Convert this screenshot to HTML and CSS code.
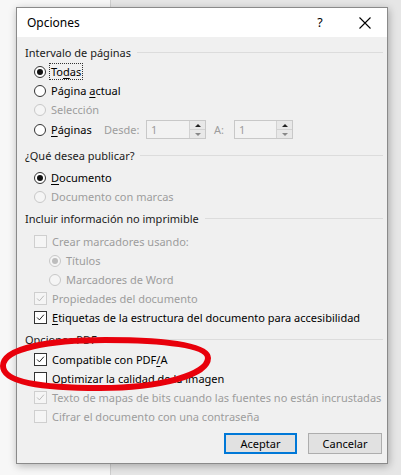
FILE: index.html
```html
<!DOCTYPE html>
<html lang="es">
<head>
<meta charset="utf-8">
<title>Opciones</title>
<link rel="stylesheet" href="styles.css">
</head>
<body>
<div class="screen">
  <div class="dialog">
    <div class="titlebar">
      <span class="title">Opciones</span>
      <span class="help">?</span>
      <span class="close"><svg width="12" height="12" viewBox="0 0 12 12"><path d="M0.5 0.5 L11.5 11.5 M11.5 0.5 L0.5 11.5" stroke="#000" stroke-width="1.1" fill="none"/></svg></span>
    </div>
    <div class="content">
      <section class="group g1">
        <div class="ghead"><span>Intervalo de páginas</span></div>
        <div class="row"><span class="radio on"></span><span class="lbl focus">To<u>d</u>as</span></div>
        <div class="row"><span class="radio"></span><span class="lbl">Página <u>a</u>ctual</span></div>
        <div class="row dis"><span class="radio"></span><span class="lbl">Selección</span></div>
        <div class="row spinrow">
          <span class="radio"></span><span class="lbl lbl-pag"><u>P</u>áginas</span>
          <span class="slabel desde">Desde:</span>
          <span class="spin"><span class="val">1</span><span class="btns"><span class="sb up"></span><span class="sb down"></span></span></span>
          <span class="slabel a">A:</span>
          <span class="spin"><span class="val">1</span><span class="btns"><span class="sb up"></span><span class="sb down"></span></span></span>
        </div>
      </section>
      <section class="group g2">
        <div class="ghead"><span>¿Qué desea publicar?</span></div>
        <div class="row"><span class="radio on"></span><span class="lbl"><u>D</u>ocumento</span></div>
        <div class="row dis"><span class="radio"></span><span class="lbl">Documento con marcas</span></div>
      </section>
      <section class="group g3">
        <div class="ghead"><span>Incluir información no imprimible</span></div>
        <div class="row dis"><span class="check"></span><span class="lbl">Crear marcadores usando:</span></div>
        <div class="row dis sub"><span class="radio on"></span><span class="lbl">Títulos</span></div>
        <div class="row dis sub"><span class="radio"></span><span class="lbl">Marcadores de Word</span></div>
        <div class="row dis"><span class="check on"><svg viewBox="0 0 13 13"><path d="M2.5 6.5 L5.2 9.3 L10.5 3.2"/></svg></span><span class="lbl">Propiedades del documento</span></div>
        <div class="row"><span class="check on"><svg viewBox="0 0 13 13"><path d="M2.5 6.5 L5.2 9.3 L10.5 3.2"/></svg></span><span class="lbl"><u>E</u>tiquetas de la estructura del documento para accesibilidad</span></div>
      </section>
      <section class="group g4">
        <div class="ghead"><span>Opciones PDF</span></div>
        <div class="row"><span class="check on"><svg viewBox="0 0 13 13"><path d="M2.5 6.5 L5.2 9.3 L10.5 3.2"/></svg></span><span class="lbl">Compatible con PDF<u>/</u>A</span></div>
        <div class="row"><span class="check"></span><span class="lbl">Optimizar la calidad de la imagen</span></div>
        <div class="row dis"><span class="check on"><svg viewBox="0 0 13 13"><path d="M2.5 6.5 L5.2 9.3 L10.5 3.2"/></svg></span><span class="lbl">Texto de mapas de bits cuando las fuentes no están incrustadas</span></div>
        <div class="row dis"><span class="check"></span><span class="lbl">Cifrar el documento con una contraseña</span></div>
      </section>
      <div class="buttons">
        <button class="btn default">Aceptar</button>
        <button class="btn">Cancelar</button>
      </div>
    </div>
  </div>
  <svg class="mark" width="215" height="70" viewBox="0 330 215 70">
    <path d="M3 366 C3 348 50 340 105 340 C165 340 208 345 208 358 C208 375 160 388 100 388 C40 388 3 382 3 366 Z" fill="none" stroke="#e8000b" stroke-width="6"/>
  </svg>
</div>
</body>
</html>
```

FILE: styles.css
```css
* { box-sizing: border-box; }
html, body { margin: 0; padding: 0; }
body {
  width: 401px;
  height: 475px;
  overflow: hidden;
  font-family: "Noto Sans", "Open Sans", sans-serif;
  font-size: 11px;
  color: #000;
  background: linear-gradient(to right, #f7f7f7 0, #f7f7f7 110px, #cfcfcf 110px, #cfcfcf 111px, #e6e6e6 111px);
}
.screen {
  position: relative;
  width: 401px;
  height: 475px;
  padding-top: 7px;
  padding-left: 16px;
}
.dialog {
  width: 372px;
  height: 457px;
  border: 1px solid #8a8a8a;
  background: #f0f0f0;
  box-shadow: 1px 2px 8px rgba(0,0,0,0.28);
  display: flex;
  flex-direction: column;
}
.titlebar {
  height: 29px;
  background: #fff;
  display: flex;
  align-items: center;
  padding-left: 10px;
  flex: none;
}
.title { font-size: 12px; flex: 1; }
.help { width: 12px; text-align: center; font-size: 12.5px; margin-right: 33px; }
.close { width: 12px; height: 12px; margin-right: 16px; display: flex; }
.content {
  flex: 1;
  padding: 5px 4px 0 8px;
  display: flex;
  flex-direction: column;
}
.ghead {
  height: 20px;
  display: flex;
  align-items: center;
  color: #1a1a1a;
}
.ghead::after {
  content: "";
  flex: 1;
  height: 1px;
  background: #dcdcdc;
  margin-left: 6px;
}
.g2 { margin-top: 5px; }
.g3 { margin-top: 2px; }
.g4 { margin-top: 2px; }
.g2 .ghead { margin-bottom: 3px; }
.g3 .ghead { margin-bottom: 4px; }
.g4 .ghead { margin-bottom: 1px; }
.row {
  height: 19px;
  display: flex;
  align-items: center;
  padding-left: 9px;
  color: #000;
}
.row.sub { padding-left: 24px; }
.row.dis { color: #9d9d9d; }
.radio {
  width: 12px;
  height: 12px;
  border-radius: 50%;
  border: 1px solid #333;
  background: #fff;
  margin-right: 5px;
  display: flex;
  align-items: center;
  justify-content: center;
  flex: none;
}
.radio.on::after {
  content: "";
  width: 6px;
  height: 6px;
  border-radius: 50%;
  background: #111;
}
.dis .radio { border-color: #c8c8c8; background: #f5f5f5; }
.dis .radio.on::after { background: #bdbdbd; }
.check {
  width: 13px;
  height: 13px;
  border: 1px solid #333;
  background: #fff;
  margin-right: 5px;
  flex: none;
  display: flex;
}
.check svg { width: 11px; height: 11px; overflow: visible; }
.check path { fill: none; stroke: #111; stroke-width: 1.1; }
.dis .check { border-color: #cfcfcf; background: #f5f5f5; }
.dis .check path { stroke: #b5b5b5; }
.lbl { white-space: nowrap; line-height: 15px; }
.lbl u { text-decoration-thickness: 1px; text-underline-offset: 2px; }
.focus { outline: 1px dotted #333; outline-offset: 0; padding: 0 1px; margin-left: -1px; }
.spinrow { height: 21px; }
.lbl-pag { width: 53px; }
.slabel { color: #9d9d9d; }
.desde { width: 42px; }
.a { width: 20px; margin-left: 8px; }
.spin {
  width: 60px;
  height: 19px;
  border: 1px solid #c8c8c8;
  background: #f2f2f2;
  display: flex;
  color: #9d9d9d;
}
.spin + .slabel + .spin { width: 59px; }
.val { flex: 1; padding-left: 4px; line-height: 17px; }
.btns { width: 16px; display: flex; flex-direction: column; border-left: 1px solid #d2d2d2; }
.sb { flex: 1; background: #e8e8e8; display: flex; align-items: center; justify-content: center; }
.sb.up { border-bottom: 1px solid #d2d2d2; }
.sb.up::after { content: ""; border-left: 3px solid transparent; border-right: 3px solid transparent; border-bottom: 3px solid #222; }
.sb.down::after { content: ""; border-left: 3px solid transparent; border-right: 3px solid transparent; border-top: 3px solid #888; }
.buttons {
  margin-top: 7px;
  display: flex;
  justify-content: flex-end;
  gap: 11px;
  padding-right: 1px;
}
.btn {
  font: inherit;
  color: #000;
  width: 74px;
  height: 21px;
  background: #e1e1e1;
  border: 1px solid #adadad;
  padding: 0;
}
.btn.default { width: 73px; border: 2px solid #0078d7; }
.mark { position: absolute; left: 0; top: 330px; }
```
